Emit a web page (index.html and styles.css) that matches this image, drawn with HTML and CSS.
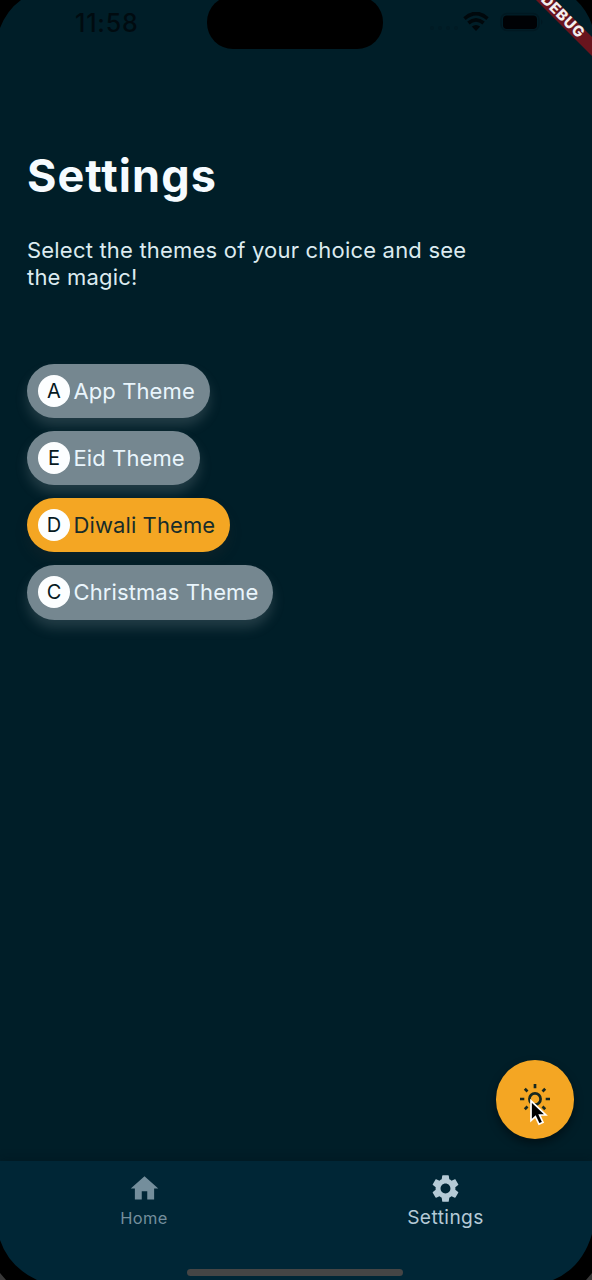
FILE: index.html
```html
<!DOCTYPE html>
<html lang="en">
<head>
<meta charset="utf-8">
<title>Settings</title>
<link rel="stylesheet" href="styles.css">
</head>
<body>
<div class="phone">
  <header class="status">
    <span class="time">11:58</span>
    <span class="island"></span>
    <span class="indicators">
      <svg class="dots" width="32" height="6" viewBox="0 0 32 6"><circle cx="4" cy="3" r="2"/><circle cx="12" cy="3" r="2"/><circle cx="20" cy="3" r="2"/><circle cx="28" cy="3" r="2"/></svg>
      <svg class="wifi" width="26" height="20" viewBox="0 0 26 20"><path d="M1.5 6.6Q13-3.6 24.5 6.6" /><path d="M5.4 11Q13 4.6 20.6 11"/><path class="wifi-tip" d="M8.8 14.6Q13 11.2 17.2 14.6L13 19z"/></svg>
      <svg class="battery" width="44" height="20" viewBox="0 0 44 20"><rect class="shell" x="1" y="1.5" width="38" height="17" rx="6"/><rect x="3" y="3.5" width="34" height="13.5" rx="4"/><path class="nub" d="M41 7.5q3 2.5 0 5z"/></svg>
    </span>
  </header>

  <main class="content">
    <h1 class="title">Settings</h1>
    <p class="intro">Select the themes of your choice and see<br>the magic!</p>
    <div class="chips">
      <button class="chip"><span class="avatar">A</span><span class="chip-label">App Theme</span></button>
      <button class="chip"><span class="avatar">E</span><span class="chip-label">Eid Theme</span></button>
      <button class="chip selected"><span class="avatar">D</span><span class="chip-label">Diwali Theme</span></button>
      <button class="chip"><span class="avatar">C</span><span class="chip-label">Christmas Theme</span></button>
    </div>
  </main>

  <nav class="nav">
    <a class="tab"><svg class="tab-icon" viewBox="0 0 24 24"><path d="M10 20v-6h4v6h5v-8h3L12 3 2 12h3v8z"/></svg><span class="tab-label">Home</span></a>
    <a class="tab active"><svg class="tab-icon" viewBox="0 0 24 24"><path d="M19.14 12.94c.04-.3.06-.61.06-.94 0-.32-.02-.64-.07-.94l2.03-1.58c.18-.14.23-.41.12-.61l-1.92-3.32c-.12-.22-.37-.29-.59-.22l-2.39.96c-.5-.38-1.03-.7-1.62-.94L14.4 2.81c-.04-.24-.24-.41-.48-.41h-3.84c-.24 0-.43.17-.47.41l-.36 2.54c-.59.24-1.13.57-1.62.94l-2.39-.96c-.22-.08-.47 0-.59.22L2.74 8.87c-.12.21-.08.47.12.61l2.03 1.58c-.05.3-.09.63-.09.94s.02.64.07.94l-2.03 1.58c-.18.14-.23.41-.12.61l1.92 3.32c.12.22.37.29.59.22l2.39-.96c.5.38 1.03.7 1.62.94l.36 2.54c.05.24.24.41.48.41h3.84c.24 0 .44-.17.47-.41l.36-2.54c.59-.24 1.13-.56 1.62-.94l2.39.96c.22.08.47 0 .59-.22l1.92-3.32c.12-.22.07-.47-.12-.61l-2.01-1.58zM12 15.6c-1.98 0-3.6-1.62-3.6-3.6s1.62-3.6 3.6-3.6 3.6 1.62 3.6 3.6-1.62 3.6-3.6 3.6z"/></svg><span class="tab-label">Settings</span></a>
  </nav>

  <button class="fab" aria-label="Toggle brightness">
    <svg width="34" height="34" viewBox="-17 -17 34 34"><circle r="5.6"/><path d="M0-15v4.3M0 15v-4.3M-15 0h4.3M15 0h-4.3M-10.2-10.2l2.7 2.7M10.2-10.2l-2.7 2.7M-10.2 10.2l2.7-2.7M10.2 10.2l-2.7-2.7"/></svg>
  </button>

  <svg class="cursor" width="20" height="30" viewBox="0 0 20 30"><path d="M2 1.8V21.6L6.4 17.6L10 25.2L14 23.4L10.6 16H16.8z"/></svg>

  <span class="home-indicator"></span>
  <svg class="overlay" viewBox="0 0 592 1280">
    <path d="M0 0H21Q7 10 0 28z"/>
    <path d="M576 0H592V25Q587 10 576 0z"/>
    <path d="M0 1240Q9 1267 37 1280H0z"/>
    <path d="M592 1234Q582 1268 553 1280H592z"/>
    <path class="edge" d="M0 1273L6 1280H0zM592 1273L586 1280H592z"/>
    <path class="ribbon" d="M536 0H555L592 37V56z"/>
    <text class="ribbon-text" transform="translate(540.2 .5) rotate(45)" x="0" y="0">DEBUG</text>
  </svg>
</div>
</body>
</html>
```
FILE: styles.css
```css
* { box-sizing: border-box; }
body { margin: 0; background: #000; font-family: Inter, "Liberation Sans", sans-serif; }
button { border: 0; padding: 0; font: inherit; }
.phone { position: relative; width: 592px; height: 1280px; overflow: hidden; background: #001e28; display: flex; flex-direction: column; }
.status { height: 50px; flex: none; display: grid; grid-template-columns: 207px 176px 1fr; align-items: start; }
.time { padding: 9px 0 0 75px; font-size: 25px; line-height: 29px; font-weight: 500; letter-spacing: .8px; color: #000b10; }
.island { height: 53px; margin-top: -4px; background: #000; border-radius: 26px; }
.indicators { display: flex; align-items: center; padding: 12px 0 0 45px; }
.dots { fill: #001b24; margin-top: 12px; }
.wifi { margin-left: 3px; fill: none; stroke: #00080c; stroke-width: 3.6; }
.wifi-tip { fill: #00080c; stroke: none; }
.battery { margin-left: 11px; fill: #000205; }
.shell { fill: none; stroke: #001821; stroke-width: 1.5; }
.nub { fill: #001821; }
.content { flex: 1; padding: 99px 27px 0; }
.title { margin: 0; font-size: 45px; line-height: 54px; font-weight: 700; letter-spacing: 1.05px; color: #f6fbff; }
.intro { margin: 34px 0 0; font-size: 22px; line-height: 26.6px; letter-spacing: .2px; color: #dcebf0; }
.chips { margin-top: 73.6px; display: flex; flex-direction: column; align-items: flex-start; gap: 13px; }
.chip { height: 54.2px; padding: 0 15px 0 11px; display: flex; align-items: center; gap: 3.5px; border-radius: 28px; background: #758790; color: #e9f5fc; box-shadow: 0 8px 12px rgba(117,135,144,.28); }
.avatar { width: 32px; height: 32px; border-radius: 50%; display: grid; place-items: center; background: #fcfeff; color: #06191f; font-size: 20px; font-weight: 400; }
.chip-label { font-size: 22px; line-height: 30px; letter-spacing: .1px; white-space: nowrap; }
.selected { background: #f4a623; color: #172c2a; box-shadow: 0 8px 12px rgba(40,45,45,.25); }
.nav { height: 119px; flex: none; display: grid; grid-template-columns: 288px 1fr; background: #002636; box-shadow: 0 -3px 8px rgba(0,16,22,.25); }
.tab { display: flex; flex-direction: column; align-items: center; padding-top: 11px; color: #748e9c; }
.tab-icon { width: 33px; height: 33px; fill: currentColor; }
.tab-label { font-size: 16.4px; line-height: 24px; margin-top: 1px; letter-spacing: .35px; }
.active { color: #b5cad6; padding-left: 11px; }
.active .tab-label { font-size: 19.2px; margin-top: 0; letter-spacing: .4px; }
.fab { position: absolute; left: 495.5px; top: 1060px; width: 78.5px; height: 78.5px; border-radius: 50%; background: #f4a623; display: grid; place-items: center; box-shadow: 0 5px 9px rgba(0,5,8,.5); }
.fab svg { fill: none; stroke: #172820; stroke-width: 2.7; }
.cursor { position: absolute; left: 528.5px; top: 1098.5px; fill: #000; stroke: #fff; stroke-width: 1.7; }
.home-indicator { position: absolute; left: 187px; top: 1269px; width: 216px; height: 7px; border-radius: 4px; background: #454545; }
.overlay { position: absolute; inset: 0; width: 592px; height: 1280px; pointer-events: none; }
.edge { fill: #383838; }
.ribbon { fill: #69141d; }
.ribbon-text { font-size: 14.8px; font-weight: 800; letter-spacing: .6px; fill: #f2eeee; }
```
